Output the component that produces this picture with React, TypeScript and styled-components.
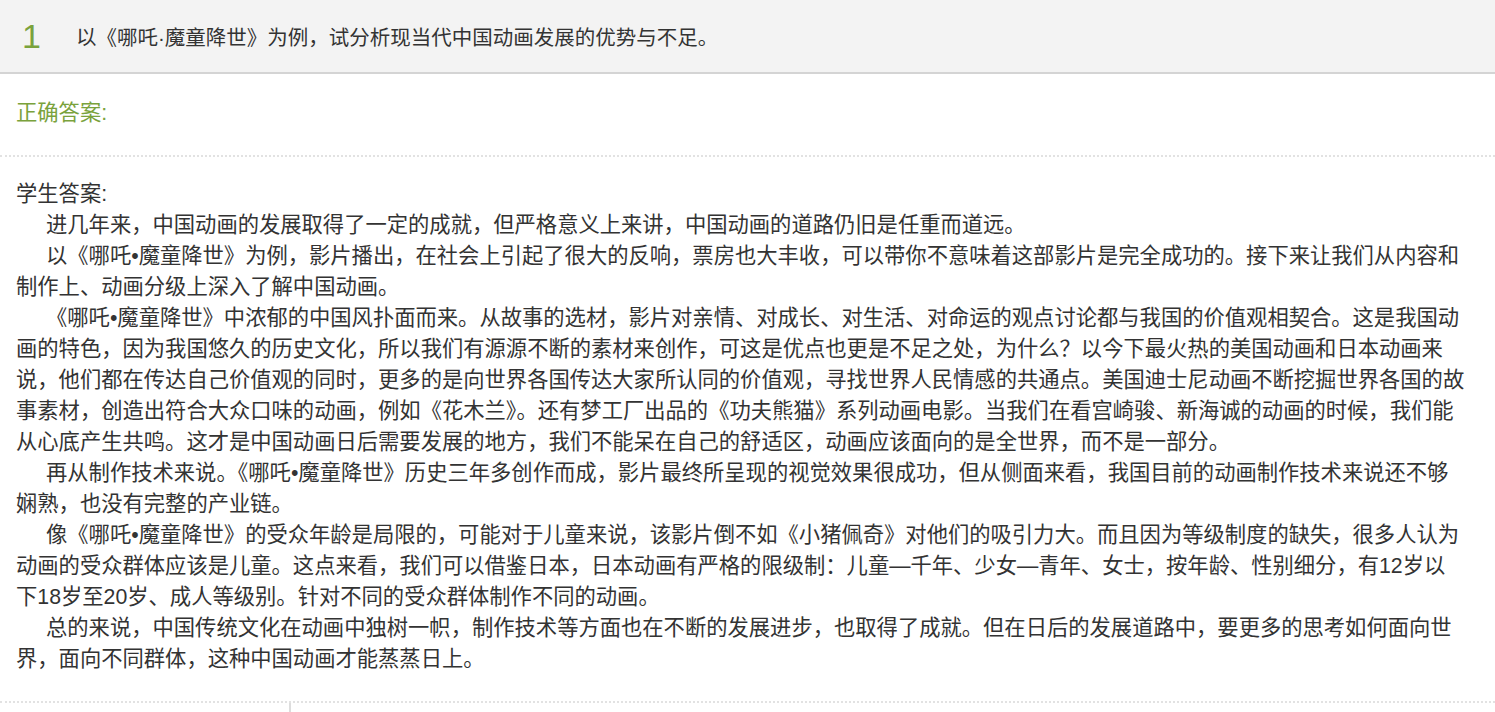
import React from 'react'
import styled, { createGlobalStyle } from 'styled-components'

const Global = createGlobalStyle`
  body {
    margin: 0;
    background: #fff;
    font-family: "Liberation Sans", "Noto Sans CJK SC", sans-serif;
    color: #333;
  }
`

const Header = styled.div`
  display: flex;
  align-items: center;
  height: 72px;
  background: #f3f3f3;
  border-bottom: 2px solid #d4d4d4;
`

const Num = styled.span`
  width: 76px;
  padding-left: 22px;
  box-sizing: border-box;
  font-size: 34px;
  color: #7aa23c;
`

const Question = styled.span`
  font-size: 20.5px;
  color: #333;
`

const Section = styled.div<{ $dotted?: boolean }>`
  padding: ${({ $dotted }) => ($dotted ? '24px 30px 26px 16px' : '22px 30px 26px 16px')};
  border-bottom: 2px dotted #e2e2e2;
  font-size: 21.3px;
  line-height: 31px;
`

const Label = styled.div<{ $green?: boolean }>`
  color: ${({ $green }) => ($green ? '#7aa23c' : '#333')};
`

const Para = styled.p`
  margin: 0;
  text-indent: 30px;
`

const Foot = styled.div`
  margin-left: 289px;
  width: 2px;
  height: 10px;
  background: #ddd;
`

const paragraphs = [
  '进几年来，中国动画的发展取得了一定的成就，但严格意义上来讲，中国动画的道路仍旧是任重而道远。',
  '以《哪吒•魔童降世》为例，影片播出，在社会上引起了很大的反响，票房也大丰收，可以带你不意味着这部影片是完全成功的。接下来让我们从内容和制作上、动画分级上深入了解中国动画。',
  '《哪吒•魔童降世》中浓郁的中国风扑面而来。从故事的选材，影片对亲情、对成长、对生活、对命运的观点讨论都与我国的价值观相契合。这是我国动画的特色，因为我国悠久的历史文化，所以我们有源源不断的素材来创作，可这是优点也更是不足之处，为什么？以今下最火热的美国动画和日本动画来说，他们都在传达自己价值观的同时，更多的是向世界各国传达大家所认同的价值观，寻找世界人民情感的共通点。美国迪士尼动画不断挖掘世界各国的故事素材，创造出符合大众口味的动画，例如《花木兰》。还有梦工厂出品的《功夫熊猫》系列动画电影。当我们在看宫崎骏、新海诚的动画的时候，我们能从心底产生共鸣。这才是中国动画日后需要发展的地方，我们不能呆在自己的舒适区，动画应该面向的是全世界，而不是一部分。',
  '再从制作技术来说。《哪吒•魔童降世》历史三年多创作而成，影片最终所呈现的视觉效果很成功，但从侧面来看，我国目前的动画制作技术来说还不够娴熟，也没有完整的产业链。',
  '像《哪吒•魔童降世》的受众年龄是局限的，可能对于儿童来说，该影片倒不如《小猪佩奇》对他们的吸引力大。而且因为等级制度的缺失，很多人认为动画的受众群体应该是儿童。这点来看，我们可以借鉴日本，日本动画有严格的限级制：儿童—千年、少女—青年、女士，按年龄、性别细分，有12岁以下18岁至20岁、成人等级别。针对不同的受众群体制作不同的动画。',
  '总的来说，中国传统文化在动画中独树一帜，制作技术等方面也在不断的发展进步，也取得了成就。但在日后的发展道路中，要更多的思考如何面向世界，面向不同群体，这种中国动画才能蒸蒸日上。',
]

export default function App() {
  return (
    <>
      <Global />
      <Header>
        <Num>1</Num>
        <Question>以《哪吒·魔童降世》为例，试分析现当代中国动画发展的优势与不足。</Question>
      </Header>
      <Section $dotted>
        <Label $green>正确答案:</Label>
      </Section>
      <Section>
        <Label>学生答案:</Label>
        {paragraphs.map((p, i) => (
          <Para key={i}>{p}</Para>
        ))}
      </Section>
      <Foot />
    </>
  )
}
